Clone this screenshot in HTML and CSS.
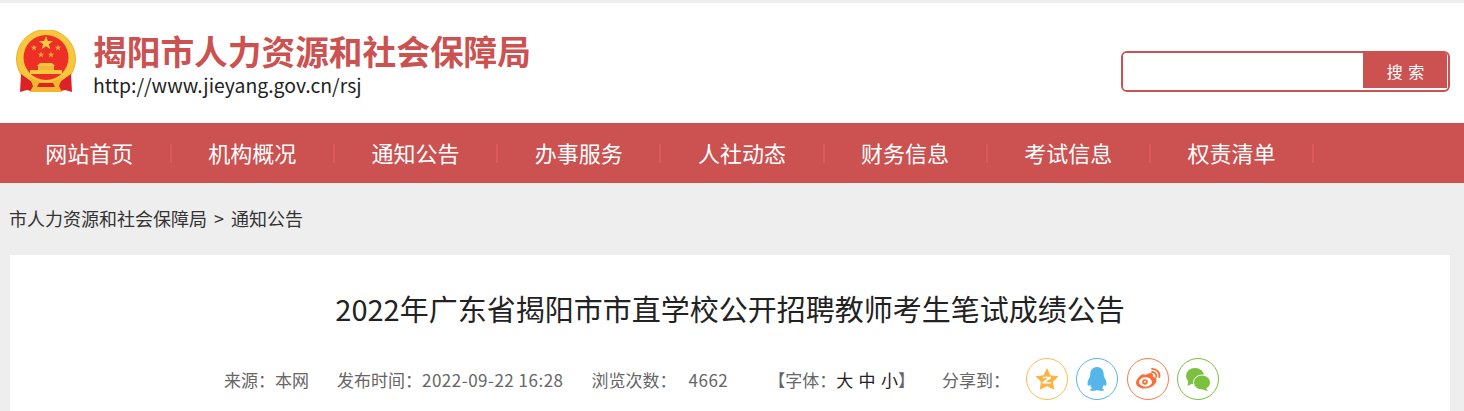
FILE: index.html
```html
<!DOCTYPE html>
<html lang="zh-CN">
<head>
<meta charset="UTF-8">
<meta name="viewport" content="width=device-width, initial-scale=1.0">
<link rel="stylesheet" href="styles.css">
<title>揭阳市人力资源和社会保障局</title>
</head>

<body>

  <header class="top">
    <div class="brand">
      <svg class="emblem" width="62" height="64" viewBox="0 0 62 64">
        <circle cx="31" cy="29" r="29.500" fill="#f7c83e"/>
        <circle cx="31" cy="29" r="29.500" fill="none" stroke="#edb030" stroke-width="1"/>
        <circle cx="31" cy="27.500" r="22.500" fill="#ee2f26"/>
        <polygon points="31,6 32.800,11 38,11 33.800,14.200 35.400,19.200 31,16.200 26.600,19.200 28.200,14.200 24,11 29.200,11" fill="#f8c93f"/>
        <polygon points="19,14.500 19.800,16.700 22.200,16.700 20.300,18.100 21,20.400 19,19 17,20.400 17.700,18.100 15.800,16.700 18.200,16.700" fill="#eeb23a"/>
        <polygon points="43,14.500 43.800,16.700 46.200,16.700 44.300,18.100 45,20.400 43,19 41,20.400 41.700,18.100 39.800,16.700 42.200,16.700" fill="#eeb23a"/>
        <polygon points="26,21.500 26.800,23.700 29.200,23.700 27.300,25.100 28,27.400 26,26 24,27.400 24.700,25.100 22.800,23.700 25.200,23.700" fill="#eeb23a"/>
        <polygon points="36,21.500 36.800,23.700 39.200,23.700 37.300,25.100 38,27.400 36,26 34,27.400 34.700,25.100 32.800,23.700 35.200,23.700" fill="#eeb23a"/>
        <path d="M25 33 H37 L40 36 H22 Z" fill="#f8c93f"/>
        <rect x="23" y="36" width="16" height="4" fill="#f2b63a"/>
        <rect x="15" y="40" width="32" height="4" fill="#f8c93f"/>
        <path d="M6 44 L20 54 L20 62 L12 60 L5 62 Z" fill="#dc2224"/>
        <path d="M56 44 L42 54 L42 62 L50 60 L57 62 Z" fill="#dc2224"/>
        <path d="M14 46 Q31 58 48 46 L44 56 L47 62 H15 L18 56 Z" fill="#f3b52f"/>
        <path d="M24 53 H38 L40 57 H22 Z" fill="#dc2224"/>
      </svg>
      <div class="brand-text">
        <h1 class="site-name">揭阳市人力资源和社会保障局</h1>
        <p class="site-url">http://www.jieyang.gov.cn/rsj</p>
      </div>
    </div>
    <form class="search">
      <input class="search-input" type="text">
      <button class="search-btn" type="button">搜 索</button>
    </form>
  </header>

  <nav class="nav">
    <a class="nav-item">网站首页</a>
    <a class="nav-item">机构概况</a>
    <a class="nav-item">通知公告</a>
    <a class="nav-item">办事服务</a>
    <a class="nav-item">人社动态</a>
    <a class="nav-item">财务信息</a>
    <a class="nav-item">考试信息</a>
    <a class="nav-item">权责清单</a>
  </nav>

  <div class="crumb">市人力资源和社会保障局 &gt; 通知公告</div>

  <main class="card">
    <h2 class="title">2022年广东省揭阳市市直学校公开招聘教师考生笔试成绩公告</h2>
    <div class="meta">
      <span class="meta-source">来源：本网</span>
      <span class="meta-time">发布时间：<i class="num">2022-09-22 16:28</i></span>
      <span class="meta-views">浏览次数：</span>
      <i class="num meta-count">4662</i>
      <span class="meta-font">【字体：<b>大 中 小</b>】</span>
      <span class="meta-share">分享到：</span>
      <div class="share">
        <a class="share-icon qzone">
          <svg width="24" height="24" viewBox="0 0 24 24"><path d="M12 1 L15.400 8.200 L23.500 9.300 L18 14.800 L19.300 22.800 L12 19.200 L4.700 22.800 L6 14.800 L.5 9.300 L8.600 8.200 Z" fill="#fdb342"/><path d="M8 9.800 H16 V11.300 L10.500 15 H16 V16.500 H7.500 V15 L13 11.300 H8 Z" fill="#fff"/></svg>
        </a>
        <a class="share-icon qq">
          <svg width="24" height="26" viewBox="0 0 24 26"><path d="M12 1 C17 1 18.800 5 18.800 9 C18.800 10 19 10.800 20 12.500 C21.500 15 22 18 21 19.500 C20.300 20.300 19.300 19.300 18.800 18.500 C18.500 20.500 17.800 21.500 17 22.200 C18.500 22.800 19.300 23.500 18.800 24.300 C18 25.300 14 25 12 24 C10 25 6 25.300 5.200 24.300 C4.700 23.500 5.500 22.800 7 22.200 C6.200 21.500 5.500 20.500 5.200 18.500 C4.700 19.300 3.700 20.300 3 19.500 C2 18 2.500 15 4 12.500 C5 10.800 5.200 10 5.200 9 C5.200 5 7 1 12 1 Z" fill="#55b6ea"/></svg>
        </a>
        <a class="share-icon weibo">
          <svg width="26" height="24" viewBox="0 0 26 24"><path d="M10.500 8 C14 5.500 17 5.300 17.800 7 C18.200 7.900 18 8.800 17.700 9.700 C20 9.700 21.500 11 21.500 13 C21.500 17.500 15.500 21.500 9.500 21.500 C4.500 21.500 1 19 1 15.500 C1 13.300 2.800 10.500 5.500 8.500 C7.500 7 9.300 7 10.500 8 Z" fill="#fb6e38"/><ellipse cx="10.500" cy="15" rx="6.500" ry="4.700" fill="#fff"/><circle cx="10" cy="15" r="2.800" fill="#fb6e38"/><circle cx="10" cy="14.800" r="1" fill="#fff"/><path d="M17 1.800 C21.500 1.500 25.200 5.500 24.300 10.200 M17 5 C19.700 4.800 21.800 7 21.300 9.800" fill="none" stroke="#fb6e38" stroke-width="1.800" stroke-linecap="round"/></svg>
        </a>
        <a class="share-icon wechat">
          <svg width="26" height="24" viewBox="0 0 26 24"><ellipse cx="10" cy="9" rx="9" ry="8" fill="#7cc03f"/><path d="M3.500 13 L2.500 19 L8.500 16 Z" fill="#7cc03f"/><ellipse cx="17" cy="15.500" rx="8.500" ry="7.500" fill="#7cc03f" stroke="#fff" stroke-width="1"/><path d="M21 21 L23 24 L17.500 22.500 Z" fill="#7cc03f"/></svg>
        </a>
      </div>
    </div>
  </main>

</body>
</html>
```

FILE: styles.css
```css
html, body {
  margin: 0;
  padding: 0;
}
body {
  background-color: #eeeeee;
  font-family: "Noto Sans CJK SC", "Liberation Sans", sans-serif;
  padding-top: 3px;
  height: 408px;
  overflow: hidden;
}

/* 顶部 */
.top {
  background-color: #fff;
  height: 120px;
  display: flex;
  justify-content: space-between;
  padding: 0 14px 0 15px;
}
.brand {
  display: flex;
  align-items: flex-start;
  padding-top: 27px;
}
.emblem {
  margin-right: 16px;
}
.site-name {
  margin: 0;
  padding-top: 4px;
  color: #cb5251;
  font-family: "Liberation Sans", "Noto Sans CJK SC", sans-serif;
  font-size: 33.7px;
  font-weight: bold;
  line-height: 38px;
  white-space: nowrap;
}
.site-url {
  margin: 0;
  color: #222;
  font-size: 19.4px;
  line-height: 26px;
}
.search {
  display: flex;
  align-self: flex-start;
  box-sizing: border-box;
  width: 329px;
  height: 41px;
  margin-top: 48px;
  border: 2px solid #cb5251;
  border-radius: 6px;
  overflow: hidden;
}
.search-input {
  flex: 1;
  min-width: 0;
  border: 0;
  outline: 0;
  padding: 0;
}
.search-btn {
  width: 84px;
  height: 35px;
  margin-right: 1px;
  border: 0;
  padding: 0 0 0 2px;
  background-color: #cb5251;
  color: #fff;
  font-family: inherit;
  font-size: 16px;
  letter-spacing: 1px;
}

/* 导航 */
.nav {
  background-color: #cb5251;
  height: 60px;
  display: flex;
  align-items: center;
  padding-left: 8.6px;
}
.nav-item {
  box-sizing: border-box;
  width: 163.2px;
  height: 19px;
  line-height: 16px;
  border-right: 2px solid #dd5a5a;
  color: #fff;
  font-size: 22px;
  text-align: center;
}

/* 面包屑 */
.crumb {
  height: 72px;
  line-height: 71px;
  padding-left: 9px;
  color: #333;
  font-size: 18px;
  word-spacing: 3px;
}

/* 正文 */
.card {
  background-color: #fff;
  margin: 0 14px 0 10px;
  height: 156px;
}
.title {
  margin: 0;
  padding-top: 33px;
  color: #222;
  font-size: 29px;
  font-weight: normal;
  line-height: 40px;
  text-align: center;
}
.meta {
  display: flex;
  align-items: center;
  margin-top: 29px;
  padding-left: 214px;
  color: #666;
  font-size: 17px;
  height: 44px;
}
.num {
  font-style: normal;
  letter-spacing: .5px;
}
.meta-source {
  margin-right: 28px;
}
.meta-time {
  margin-right: 28px;
}
.meta-count {
  margin-left: 12px;
  margin-right: 40px;
}
.meta-font b {
  color: #222;
  font-weight: normal;
  word-spacing: 1.5px;
}
.meta-share {
  margin-left: 27px;
  margin-right: 16px;
}
.share {
  display: flex;
  gap: 8.3px;
}
.share-icon {
  box-sizing: border-box;
  width: 42px;
  height: 42px;
  border: 1px solid;
  border-radius: 50%;
  display: flex;
  align-items: center;
  justify-content: center;
}
.qzone { border-color: #fdbd4f; }
.qq { border-color: #55b6ea; }
.weibo { border-color: #fb7a4a; }
.wechat { border-color: #7cc03f; }
```
